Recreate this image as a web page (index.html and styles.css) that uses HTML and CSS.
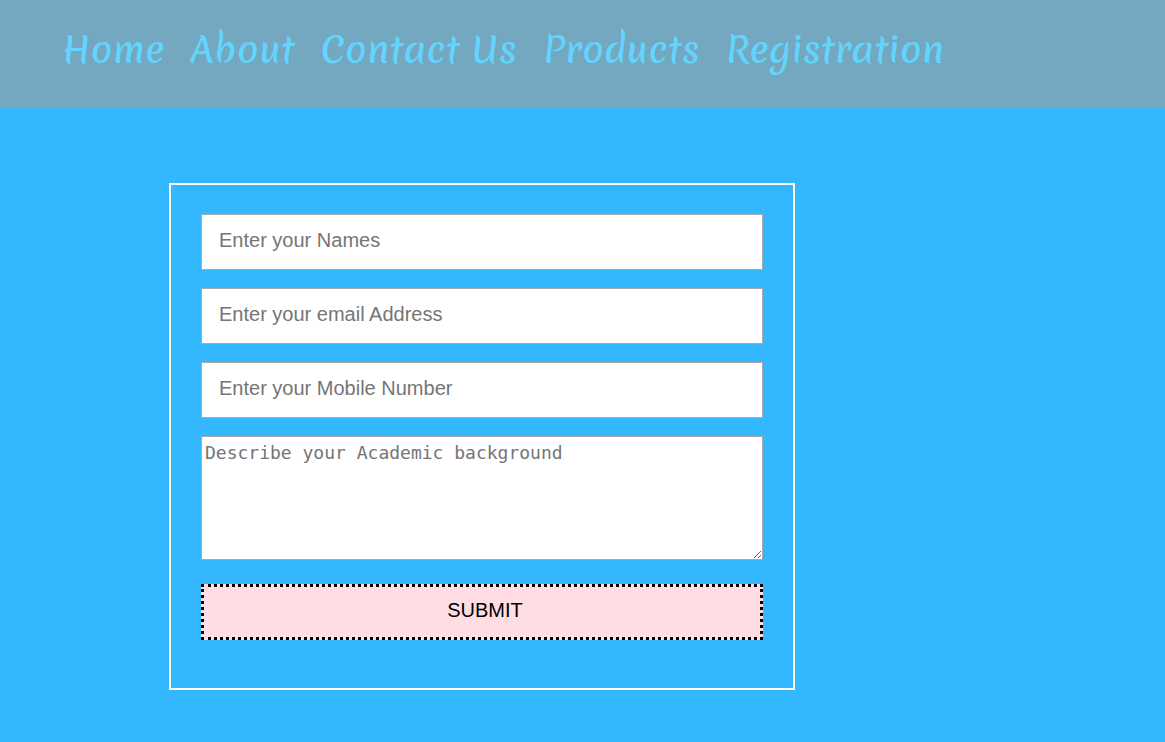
FILE: index.html
```html
<!DOCTYPE html>
<html lang="en">
<head>
<meta charset="utf-8">
<meta name="viewport" content="width=device-width, initial-scale=1">
<title>Registration</title>
<link rel="stylesheet" href="styles.css">
</head>
<body>
<header class="site-header">
  <nav class="nav">
    <a class="nav-link" href="#home">Home</a>
    <a class="nav-link" href="#about">About</a>
    <a class="nav-link" href="#contact">Contact Us</a>
    <a class="nav-link" href="#products">Products</a>
    <a class="nav-link" href="#registration">Registration</a>
  </nav>
</header>
<main class="main">
  <form class="form">
    <input class="field" type="text" name="names" aria-label="Names" placeholder="Enter your Names">
    <input class="field" type="email" name="email" aria-label="Email address" placeholder="Enter your email Address">
    <input class="field" type="tel" name="mobile" aria-label="Mobile number" placeholder="Enter your Mobile Number">
    <textarea class="background" name="background" aria-label="Academic background" placeholder="Describe your Academic background"></textarea>
    <button class="submit" type="submit">SUBMIT</button>
  </form>
</main>
</body>
</html>
```
FILE: styles.css
```css
* {
  box-sizing: border-box;
}

body {
  margin: 0;
  background: #33b8ff;
  font-family: "Liberation Sans", Arial, sans-serif;
}

.site-header {
  padding: 25px 62px 35px;
  background: #74a7c0;
}

.nav {
  display: flex;
  flex-wrap: wrap;
  gap: 26px;
}

.nav-link {
  color: #62d5ff;
  font: 500 36px/48px Merienda, Lato, sans-serif;
  text-decoration: none;
}

.main {
  padding: 75px 24px 52px 169px;
}

.form {
  display: flex;
  flex-direction: column;
  gap: 18px;
  max-width: 626px;
  padding: 29px 30px 48px;
  border: 2px solid #fff;
}

.field {
  width: 100%;
  height: 56px;
  padding: 0 17px 4px;
  border: 1px solid #a9a9a9;
  border-radius: 0;
  background: #fff;
  font: 20px "Liberation Sans", Arial, sans-serif;
}

.field::placeholder,
.background::placeholder {
  color: #757575;
}

.background {
  width: 100%;
  height: 124px;
  padding: 4px 3px;
  border: 1px solid #a9a9a9;
  border-radius: 0;
  background: #fff;
  font: 18px/24px Consolas, "DejaVu Sans Mono", monospace;
  resize: both;
}

.submit {
  height: 56px;
  margin-top: 6px;
  padding: 0 0 4px 6px;
  border: 3px dotted #000;
  background: #ffdde2;
  color: #000;
  font: 20px "Liberation Sans", Arial, sans-serif;
}
```
